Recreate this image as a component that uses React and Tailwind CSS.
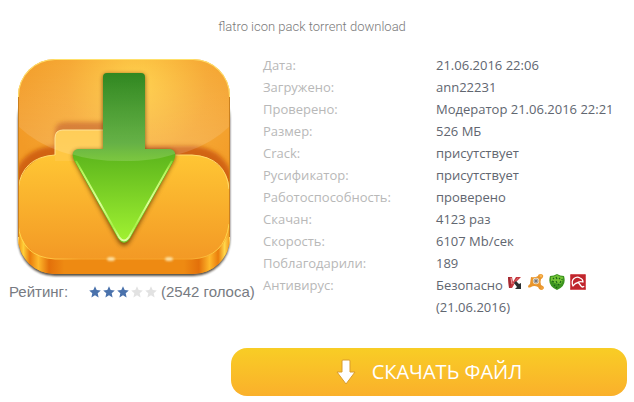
const rows = [
  { label: "Дата:", value: "21.06.2016 22:06" },
  { label: "Загружено:", value: "ann22231" },
  { label: "Проверено:", value: "Модератор 21.06.2016 22:21" },
  { label: "Размер:", value: "526 МБ" },
  { label: "Crack:", value: "присутствует" },
  { label: "Русификатор:", value: "присутствует" },
  { label: "Работоспособность:", value: "проверено" },
  { label: "Скачан:", value: "4123 раз" },
  { label: "Скорость:", value: "6107 Mb/сек" },
  { label: "Поблагодарили:", value: "189" },
];

function FolderIcon() {
  return (
    <svg viewBox="0 0 228 228" className="block w-full" aria-hidden="true">
      <defs>
        <radialGradient id="back" cx="0.56" cy="0.12" r="0.6">
          <stop offset="0" stopColor="#ffd04a" />
          <stop offset="0.55" stopColor="#f6a935" />
          <stop offset="1" stopColor="#f29a26" />
        </radialGradient>
        <linearGradient id="front" x1="0" y1="0" x2="0" y2="1">
          <stop offset="0" stopColor="#ffc634" />
          <stop offset="1" stopColor="#f39925" />
        </linearGradient>
        <linearGradient id="edge" x1="0" y1="0" x2="1" y2="0">
          <stop offset="0" stopColor="#f0850f" />
          <stop offset="0.03" stopColor="#ffcf38" />
          <stop offset="0.06" stopColor="#ea7d0c" />
          <stop offset="0.1" stopColor="#ffb92b" />
          <stop offset="0.15" stopColor="#e3700a" />
          <stop offset="0.22" stopColor="#ee8a12" />
          <stop offset="0.78" stopColor="#ee8a12" />
          <stop offset="0.85" stopColor="#e3700a" />
          <stop offset="0.9" stopColor="#ffb92b" />
          <stop offset="0.94" stopColor="#ea7d0c" />
          <stop offset="0.97" stopColor="#ffd84c" />
          <stop offset="1" stopColor="#f0850f" />
        </linearGradient>
        <linearGradient id="shaft" x1="0" y1="20" x2="0" y2="190" gradientUnits="userSpaceOnUse">
          <stop offset="0" stopColor="#2f8620" />
          <stop offset="0.42" stopColor="#4fa62b" />
          <stop offset="0.5" stopColor="#5fb81d" />
          <stop offset="1" stopColor="#a2f232" />
        </linearGradient>
        <linearGradient id="rim" x1="0" y1="96" x2="0" y2="188" gradientUnits="userSpaceOnUse">
          <stop offset="0" stopColor="#7fd42a" stopOpacity="0" />
          <stop offset="0.25" stopColor="#b8f55c" />
          <stop offset="0.6" stopColor="#dcff9a" />
          <stop offset="0.85" stopColor="#a9f046" />
          <stop offset="1" stopColor="#e4ffa8" />
        </linearGradient>
        <linearGradient id="gloss" x1="0" y1="0" x2="0" y2="1">
          <stop offset="0" stopColor="#fff" stopOpacity="0" />
          <stop offset="1" stopColor="#fff" stopOpacity="0.16" />
        </linearGradient>
        <linearGradient id="lip" x1="0" y1="0" x2="1" y2="0">
          <stop offset="0" stopColor="#ffd84c" />
          <stop offset="0.2" stopColor="#ffc040" />
          <stop offset="0.3" stopColor="#f7a52c" />
          <stop offset="0.8" stopColor="#f7a52c" />
          <stop offset="1" stopColor="#ffd84c" />
        </linearGradient>
        <filter id="soft" x="-20%" y="-20%" width="140%" height="140%">
          <feGaussianBlur stdDeviation="2" />
        </filter>
        <filter id="glow" x="-100%" y="-100%" width="300%" height="300%">
          <feGaussianBlur stdDeviation="1" />
        </filter>
        <clipPath id="body">
          <rect x="9" y="7" width="212" height="215" rx="37" />
        </clipPath>
        <clipPath id="arrow">
          <path d="M98 21h34q4 0 4 4v72h25q8 2 4 11l-44 78q-6 9-12 0L65 108q-4-9 4-11h25V25q0-4 4-4Z" />
        </clipPath>
      </defs>
      <rect x="9" y="30" width="212" height="194" rx="37" fill="#2b2014" opacity="0.8" filter="url(#glow)" />
      <g clipPath="url(#body)">
        <rect x="8" y="7" width="214" height="217" fill="url(#back)" />
        <path d="M46 102V80q0-10 10-10h50v30Z" fill="#c8611a" opacity="0.75" filter="url(#soft)" />
        <path d="M2 135Q8 97 44 94h140q36 2 42 41Z" fill="#c9540a" opacity="0.8" filter="url(#soft)" />
        <rect x="8" y="150" width="214" height="74" fill="url(#edge)" />
        <rect x="9" y="103" width="212" height="104" rx="37" fill="url(#front)" />
        <path d="M9 137Q13 105 46 103h137q34 2 37 34" fill="none" stroke="#ffdc6e" strokeWidth="1" />
        <path d="M9 172Q12 205 46 207h137q33-2 37-35" fill="none" stroke="url(#lip)" strokeWidth="1" />
        <path d="M46 109V86q0-8 8-8h60v31Z" fill="#ffc743" />
        <path d="M46 103V86q0-8 8-8h60" fill="none" stroke="#ffe089" strokeWidth="1" />
        <path d="M8 7h214v66q-36 36-107 36T8 73Z" fill="url(#gloss)" />
        <rect x="9" y="7" width="212" height="240" rx="37" fill="none" stroke="#ffe06a" strokeWidth="2" />
        <path d="M9 45v140M221 45v140" stroke="#c9801f" strokeWidth="2" />
        <ellipse cx="102" cy="207" rx="4" ry="2" fill="#fff3c4" opacity="0.8" filter="url(#glow)" />
        <ellipse cx="160" cy="207" rx="4" ry="2" fill="#fff3c4" opacity="0.8" filter="url(#glow)" />
      </g>
      <path
        d="M98 22h34q4 0 4 4v72h25q8 2 4 11l-44 80q-6 9-12 0L65 109q-4-9 4-11h25V26q0-4 4-4Z"
        fill="#5a3400"
        opacity="0.75"
        filter="url(#soft)"
      />
      <g clipPath="url(#arrow)">
        <rect x="60" y="18" width="108" height="175" fill="url(#shaft)" />
        <path d="M65 108l44 78q6 9 12 0l44-78" fill="none" stroke="#63c41f" strokeWidth="3" />
        <path d="M67 109l43 76q5 7 10 0l43-76" fill="none" stroke="url(#rim)" strokeWidth="2" />
        <path d="M60 18h108v83q-20 8-54 8t-54-8Z" fill="url(#gloss)" />
      </g>
    </svg>
  );
}

function Star({ filled }) {
  return (
    <svg viewBox="0 0 12 12" className={filled ? "size-3 fill-[#4a72ac]" : "size-3 fill-[#e2e2e2]"} aria-hidden="true">
      <path d="M6 .3l1.7 3.8 4.1.4-3.1 2.8.9 4.2L6 9.3l-3.6 2.2.9-4.2L.2 4.5l4.1-.4Z" />
    </svg>
  );
}

function Kaspersky() {
  return (
    <svg viewBox="0 0 16 16" className="size-4" aria-hidden="true">
      <path d="M1 3h4l1 5 3-5h5L8 9l-3 5H2Z" fill="#c4383e" />
      <path d="M1 3h2l1 8-1 3H2Z" fill="#a32a31" />
      <path d="M4 4l1 6" stroke="#eba0a2" strokeWidth="1" />
      <path d="M6 10l5-6" stroke="#dc686c" strokeWidth="1" />
      <path d="M7 9l2-2 3 3 2-1v6H8l2-2Z" fill="#2b3032" />
    </svg>
  );
}

function Avast() {
  return (
    <svg viewBox="0 0 16 16" className="size-4" aria-hidden="true">
      <path
        d="M3 3q4 1 7-1 0-2 3-2 3 1 2 3-1 2-2 2-1 3 0 6 3 1 3 3-1 2-3 2-2 0-3-3-4-2-7 0-2 1-3 0 0-2 2-3Z"
        fill="#e9952b"
      />
      <circle cx="13" cy="2" r="1.4" fill="#f7b553" />
      <circle cx="14" cy="14" r="1.4" fill="#f0a03a" />
      <circle cx="8" cy="7" r="3.2" fill="#f6dfba" />
      <circle cx="8" cy="7" r="2" fill="none" stroke="#8b8f98" strokeWidth="1" />
      <circle cx="8" cy="7" r="1" fill="#4b5668" />
    </svg>
  );
}

function DrWeb() {
  return (
    <svg viewBox="0 0 16 16" className="size-4" aria-hidden="true">
      <path d="M8 0q3 2 7 2 3 10-7 14Q-2 12 1 2q4 0 7-2Z" fill="#3c9420" />
      <path d="M8 1q3 2 6 2 0 4-2 7-6 0-10-3V3q3 0 6-2Z" fill="#74c437" />
      <path
        d="M4 4l1 1M7 3l1 2M11 4l-1 1M3 7l2 1M7 7l1 2M12 7l-1 2M5 11l1 1M9 11l1-1M7 14l1-1M13 5v1"
        stroke="#1b6416"
        strokeWidth="1.2"
      />
    </svg>
  );
}

function Avira() {
  return (
    <svg viewBox="0 0 16 16" className="size-4" aria-hidden="true">
      <rect width="16" height="16" rx="1.5" fill="#bf262d" />
      <rect x=".5" y=".5" width="15" height="15" rx="1" fill="none" stroke="#d8565b" />
      <path
        d="M3 12Q1 7 4 4.500Q7 2 10 4Q13 5 13 8Q10 7 8 8.500Q5 9 3 12Z"
        fill="none"
        stroke="#fff"
        strokeWidth="1.3"
        strokeLinejoin="round"
      />
      <path d="M8 8l3 4q2 2 3 0" fill="none" stroke="#fff" strokeWidth="1.3" />
    </svg>
  );
}

export default function App() {
  return (
    <main className="bg-white pt-[17px] pr-[7px] pb-1.5 pl-[9px] font-['Open_Sans',sans-serif]">
      <h1 className="pr-3 text-center font-['Roboto',sans-serif] text-[13px] leading-5 font-light text-[#7a7a7a]">
        flatro icon pack torrent download
      </h1>

      <div className="mt-[15px] flex items-start gap-2">
        <section className="w-[246px] shrink-0">
          <div className="w-[228px]">
            <FolderIcon />
          </div>
          <div className="mt-0.5 flex items-center whitespace-nowrap font-['Liberation_Sans',sans-serif] text-[15px] leading-5 text-[#777b82]">
            <span className="w-20">Рейтинг:</span>
            <span className="mr-1 flex gap-0.5">
              {[1, 2, 3, 4, 5].map((n) => (
                <Star key={n} filled={n <= 3} />
              ))}
            </span>
            <span>(2542 голоса)</span>
          </div>
        </section>

        <table className="mt-0.5 flex-1 text-left text-[13px] leading-[22px]">
          <tbody>
            {rows.map((row) => (
              <tr key={row.label}>
                <th scope="row" className="w-[173px] p-0 font-normal text-[#b8b8b8]">{row.label}</th>
                <td className="p-0 whitespace-nowrap text-[#616670]">{row.value}</td>
              </tr>
            ))}
            <tr className="align-top">
              <th scope="row" className="p-0 font-normal text-[#b8b8b8]">Антивирус:</th>
              <td className="p-0 text-[#616670]">
                <div className="flex">
                  <span className="mr-1">Безопасно</span>
                  <span className="flex gap-[5px]">
                    <Kaspersky />
                    <Avast />
                    <DrWeb />
                    <Avira />
                  </span>
                </div>
                (21.06.2016)
              </td>
            </tr>
          </tbody>
        </table>
      </div>

      <button
        type="button"
        className="mt-[30px] ml-[222px] flex h-12 w-[calc(100%-222px)] items-center justify-center gap-4 rounded-2xl bg-linear-to-b from-[#f8cd25] to-[#fab02b] text-xl text-white"
      >
        <svg viewBox="0 0 20 26" className="h-[26px] w-5" aria-hidden="true">
          <path d="M6 2q0-1 1-1h6q1 0 1 1v11h5l-9 12L1 13h5Z" fill="#fff" stroke="#d99b2c" strokeWidth="1" />
        </svg>
        СКАЧАТЬ ФАЙЛ
      </button>
    </main>
  );
}
